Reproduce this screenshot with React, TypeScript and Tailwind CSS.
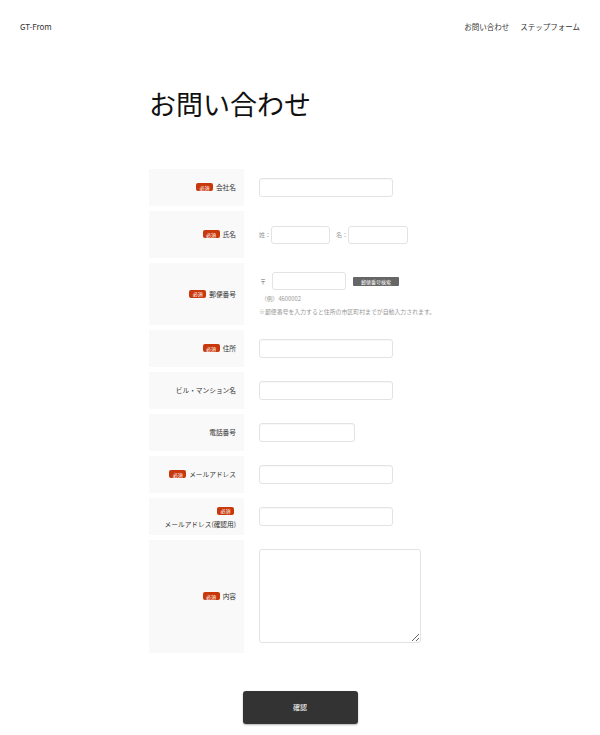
import React from 'react';

const font = { fontFamily: '"Noto Sans CJK JP", "Noto Sans", sans-serif' };

const Badge: React.FC = () => (
  <span className="inline-flex items-center justify-center bg-[#c9380b] text-white text-[5px] leading-none rounded-[2px] w-[17px] h-[8px]">
    必須
  </span>
);

const Input: React.FC<{ w: string }> = ({ w }) => (
  <div className={`${w} h-[19px] bg-white border border-[#e3e3e3] rounded-[3px] shadow-[inset_0_1px_1px_rgba(0,0,0,0.03)]`} />
);

type RowProps = {
  label: React.ReactNode;
  h: string;
  top?: boolean;
  children: React.ReactNode;
};

const Row: React.FC<RowProps> = ({ label, h, top, children }) => (
  <div className={`flex ${h}`}>
    <div className="w-[95px] shrink-0 bg-[#f9f9f9] flex items-center justify-end pr-[8px] text-[6.7px] text-[#333]">
      {label}
    </div>
    <div className={`flex-1 pl-[15px] flex ${top ? 'items-start pt-[9px]' : 'items-center'}`}>{children}</div>
  </div>
);

const App: React.FC = () => {
  return (
    <div className="min-h-screen bg-white text-[#222]" style={font}>
      {/* Header */}
      <header className="h-[54px] flex items-center justify-between px-[20px] text-[#333]">
        <div className="text-[8px]">GT-From</div>
        <nav className="flex gap-[11px] text-[7.5px]">
          <span>お問い合わせ</span>
          <span>ステップフォーム</span>
        </nav>
      </header>

      <main className="w-[302px] mx-auto">
        <h1 className="mt-[30px] text-[27px] leading-[40px] text-[#111]">お問い合わせ</h1>

        <div className="mt-[45px] flex flex-col gap-[5px]">
          <Row h="h-[37px]" label={<span className="flex items-center gap-[3px]"><Badge />会社名</span>}>
            <Input w="w-[134px]" />
          </Row>

          <Row h="h-[47px]" label={<span className="flex items-center gap-[3px]"><Badge />氏名</span>}>
            <div className="flex items-center text-[6px] text-[#999]">
              <span className="w-[12px]">姓：</span>
              <div className="w-[59px] h-[18px] border border-[#e3e3e3] rounded-[3px]" />
              <span className="ml-[6px] w-[12px]">名：</span>
              <div className="w-[60px] h-[18px] border border-[#e3e3e3] rounded-[3px]" />
            </div>
          </Row>

          <Row h="h-[62px]" top label={<span className="flex items-center gap-[3px]"><Badge />郵便番号</span>}>
            <div className="flex flex-col">
              <div className="flex items-center">
                <span className="w-[13px] pl-[1px] text-[6px] text-[#666]">〒</span>
                <div className="w-[74px] h-[18px] border border-[#e3e3e3] rounded-[3px]" />
                <span className="ml-[7px] h-[9px] w-[46px] bg-[#666] text-white text-[5px] leading-none rounded-[1px] flex items-center justify-center whitespace-nowrap">
                  郵便番号検索
                </span>
              </div>
              <div className="mt-[4px] pl-[2px] text-[5.8px] text-[#999] leading-[9px]">（例）4600002</div>
              <div className="mt-[4px] text-[5.9px] text-[#999] leading-[9px] whitespace-nowrap">
                ※郵便番号を入力すると住所の市区町村までが自動入力されます。
              </div>
            </div>
          </Row>

          <Row h="h-[37px]" label={<span className="flex items-center gap-[3px]"><Badge />住所</span>}>
            <Input w="w-[134px]" />
          </Row>

          <Row h="h-[37px]" label="ビル・マンション名">
            <Input w="w-[134px]" />
          </Row>

          <Row h="h-[37px]" label="電話番号">
            <Input w="w-[96px]" />
          </Row>

          <Row h="h-[37px]" label={<span className="flex items-center gap-[3px]"><Badge />メールアドレス</span>}>
            <Input w="w-[134px]" />
          </Row>

          <Row
            h="h-[37px]"
            label={
              <span className="flex flex-col items-end gap-[4px]">
                <span className="mr-[2px]"><Badge /></span>
                <span className="leading-[8px]">メールアドレス(確認用)</span>
              </span>
            }
          >
            <Input w="w-[134px]" />
          </Row>

          <Row h="h-[113px]" top label={<span className="flex items-center gap-[3px]"><Badge />内容</span>}>
            <textarea className="w-[162px] h-[94px] border border-[#e3e3e3] rounded-[3px] resize-y outline-none" />
          </Row>
        </div>

        <div className="flex justify-center mt-[38px] pb-[11px]">
          <button className="w-[115px] h-[33px] bg-[#333] text-white text-[7px] rounded-[3px] shadow-[0_1px_2px_rgba(0,0,0,0.3)]">
            確認
          </button>
        </div>
      </main>
    </div>
  );
};

export default App;
